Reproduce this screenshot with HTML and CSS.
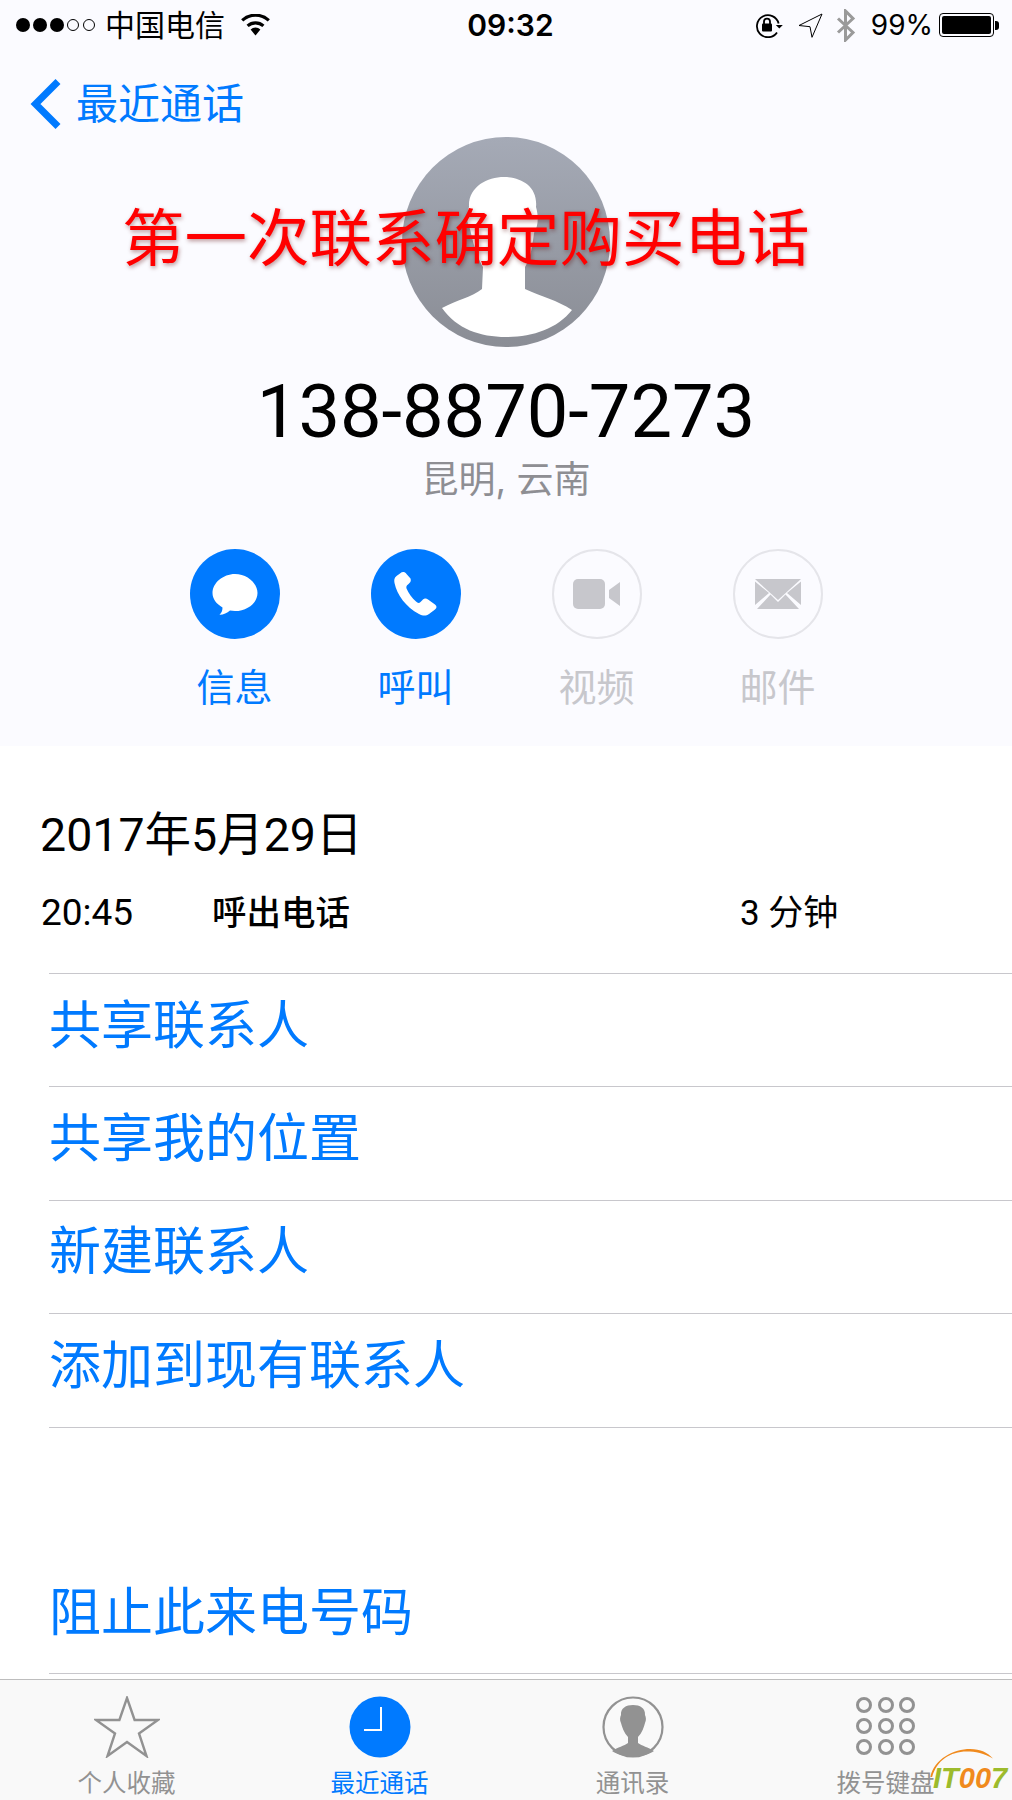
FILE: index.html
```html
<!DOCTYPE html>
<html lang="zh-CN">
<head>
    <meta charset="UTF-8">
    <meta name="viewport" content="width=device-width, initial-scale=1.0">
    <title>最近通话</title>
    <link rel="stylesheet" href="styles.css">
</head>
<body>
    <div class="top">
        <div class="status">
            <div class="status-left">
                <span class="signal">
                    <i class="dot on"></i><i class="dot on"></i><i class="dot on"></i><i class="dot"></i><i class="dot"></i>
                </span>
                <span class="carrier">中国电信</span>
                <svg class="wifi" width="31" height="22" viewBox="0 0 31 22">
                    <path d="M15.5 21.5 10.6 15.4a7.6 7.6 0 0 1 9.8 0z" fill="#000"/>
                    <path d="M7.6 11.9a12 12 0 0 1 15.8 0M2.2 6.4a19.6 19.6 0 0 1 26.6 0" fill="none" stroke="#000" stroke-width="3.2"/>
                </svg>
            </div>
            <div class="clock">09:32</div>
            <div class="status-right">
                <svg width="29" height="25" viewBox="0 0 29 25">
                    <path d="M24.6 10.5A11 11 0 1 0 23 19.5" fill="none" stroke="#000" stroke-width="1.8"/>
                    <path d="M21.8 12h7l-3.5 3.6z" fill="#000"/>
                    <rect x="8" y="10.5" width="10" height="8" rx="1" fill="#000"/>
                    <path d="M10 11V8.6a3 3 0 0 1 6 0V11" fill="none" stroke="#000" stroke-width="1.8"/>
                </svg>
                <svg class="ic-loc" width="25" height="25" viewBox="0 0 25 25">
                    <path d="M24 1 1 12.5l11 1.2 2 10.6z" fill="none" stroke="#000" stroke-width="1" stroke-linejoin="round"/>
                </svg>
                <svg class="ic-bt" width="20" height="33" viewBox="0 0 20 33">
                    <path d="M2 9.5 17 23.5 9.5 31V2L17 9.5 2 23.5" fill="none" stroke="#9a9a9a" stroke-width="3"/>
                </svg>
                <span class="battery-text">99%</span>
                <span class="battery"><i class="battery-fill"></i></span>
                <i class="battery-nub"></i>
            </div>
        </div>

        <div class="nav">
            <svg class="chevron" width="32" height="52" viewBox="0 0 32 52">
                <path d="M28 3.500 5.500 26 28 48.500" fill="none" stroke="#007aff" stroke-width="7"/>
            </svg>
            <span class="nav-title">最近通话</span>
        </div>

        <div class="contact">
            <svg class="avatar" width="208" height="210" viewBox="0 0 208 210">
                <defs>
                    <linearGradient id="avatarFill" x1="0" y1="0" x2="0" y2="1">
                        <stop offset="0" stop-color="#a5aab6"/>
                        <stop offset="1" stop-color="#8a8d95"/>
                    </linearGradient>
                </defs>
                <ellipse cx="104" cy="105" rx="104" ry="105" fill="url(#avatarFill)"/>
                <path d="M40 171C55 163 70 160 80 152L81 130C76 122 72 110 68 92C64 86 65 76 67 70C66 50 85 40 102 40C120 40 136 50 134 70C137 80 136 90 132 96C130 112 128 122 123 130L123 152C140 160 155 163 170 173C155 192 130 200 104 200C78 200 55 192 40 171Z" fill="#fff"/>
            </svg>
            <div class="stamp">第一次联系确定购买电话</div>
            <div class="phone">138-8870-7273</div>
            <div class="place">昆明, 云南</div>
        </div>

        <div class="actions">
            <div class="action">
                <span class="action-btn">
                    <svg width="46" height="46" viewBox="0 0 46 46">
                        <path d="M23 3C35 3 45.500 12 45.500 22C45.500 32 35 40 23 40C21 40 19.500 39.800 18 39.500C15 42 11 44 7.500 43.800C10 41.500 10.500 39 10.500 36.500C4.500 33 .5 28 .5 22C.5 12 11 3 23 3Z" fill="#fff"/>
                    </svg>
                </span>
                <span class="action-label">信息</span>
            </div>
            <div class="action">
                <span class="action-btn">
                    <svg width="46" height="46" viewBox="0 0 46 46">
                        <path d="M7 2.500 3.500 5C1 7 1 9 1.500 12C4 24 13 36 26 43C30 45 33 45 36 43L42 38.500C44 37 44 35 42 33.500L35 28.500C33 27 31 27.500 29.500 29L27.500 31C26 32.500 24.500 32 23 30.500C19 27 15.500 22 13.500 17.500C13 16 13.500 14.500 15 13.500L16.500 12C18 10.500 18 9 17.500 7.500L13.500 3C11.500 .5 9.500 .5 7 2.500Z" fill="#fff"/>
                    </svg>
                </span>
                <span class="action-label">呼叫</span>
            </div>
            <div class="action off">
                <span class="action-btn">
                    <svg width="48" height="30" viewBox="0 0 48 30">
                        <rect x="0" y="0" width="32" height="30" rx="5" fill="#c7c7cc"/>
                        <path d="M36 11 47 3V27L36 19Z" fill="#c7c7cc"/>
                    </svg>
                </span>
                <span class="action-label">视频</span>
            </div>
            <div class="action off">
                <span class="action-btn">
                    <svg width="46" height="30" viewBox="0 0 46 30">
                        <path d="M0 0H46L23 21Z" fill="#c7c7cc"/>
                        <path d="M0 2.500V26L14 14ZM46 2.500V26L32 14ZM2 30 15.500 15.500 23 23 30.500 15.500 44 30Z" fill="#c7c7cc"/>
                    </svg>
                </span>
                <span class="action-label">邮件</span>
            </div>
        </div>
    </div>

    <div class="details">
        <div class="date">2017年5月29日</div>
        <div class="call-row">
            <span class="call-time">20:45</span>
            <span class="call-type">呼出电话</span>
            <span>3 分钟</span>
        </div>
        <div class="links">
            <div class="link">共享联系人</div>
            <div class="link">共享我的位置</div>
            <div class="link">新建联系人</div>
            <div class="link">添加到现有联系人</div>
        </div>
        <div class="links links-plain">
            <div class="link">阻止此来电号码</div>
        </div>
    </div>

    <div class="tabbar">
        <div class="tab">
            <svg width="66" height="62" viewBox="0 0 66 62">
                <path d="M33 2 40.600 24H64L45 37.500 52.500 60 33 46 13.500 60 21 37.500 2 24H25.400Z" fill="none" stroke="#929292" stroke-width="2.400"/>
            </svg>
            <span class="tab-label">个人收藏</span>
        </div>
        <div class="tab active">
            <svg width="62" height="62" viewBox="0 0 62 62">
                <circle cx="31" cy="31" r="30.500" fill="#007aff"/>
                <path d="M32 11V34H15" fill="none" stroke="#fff" stroke-width="2"/>
            </svg>
            <span class="tab-label">最近通话</span>
        </div>
        <div class="tab">
            <svg width="62" height="62" viewBox="0 0 62 62">
                <circle cx="31" cy="31" r="29.500" fill="none" stroke="#929292" stroke-width="2.200"/>
                <path d="M10 55C16 51 22 50 26 47V41C22 37 20 31 19 27C17.500 24 18 21 19 19C18.500 12 24 9 31 9C38 9 43.500 12 43 19C44 21 44.500 24 43 27C42 31 40 37 36 41V47C40 50 46 51 52 55C47 58.500 40 60.500 31 60.500C22 60.500 15 58.500 10 55Z" fill="#929292"/>
            </svg>
            <span class="tab-label">通讯录</span>
        </div>
        <div class="tab">
            <div class="keypad">
                <i></i><i></i><i></i><i></i><i></i><i></i><i></i><i></i><i></i>
            </div>
            <span class="tab-label">拨号键盘</span>
        </div>
        <div class="watermark">
            <svg class="watermark-arc" width="72" height="30" viewBox="0 0 76 34">
                <path d="M1 33C5 12 28 1 46 1C58 1 66 5 72 12C62 6 52 4 42 4C24 4 8 14 3 33Z" fill="#f08a1d"/>
            </svg>
            <span class="wm-green">IT</span><span class="wm-orange">00</span><span class="wm-green">7</span>
        </div>
    </div>
</body>
</html>
```

FILE: styles.css
```css
html, body {
    margin: 0;
    padding: 0;
}
body {
    width: 1012px;
    height: 1800px;
    overflow: hidden;
    display: flex;
    flex-direction: column;
    background-color: #fff;
    color: #000;
    font-family: Inter, "Noto Sans CJK SC", sans-serif;
}
i {
    display: block;
}
.top {
    height: 746px;
    flex: none;
    background-color: #fbfbff;
}
.status {
    height: 50px;
    display: grid;
    grid-template-columns: 1fr auto 1fr;
    align-items: center;
}
.status-left {
    display: flex;
    align-items: center;
    padding-left: 16px;
}
.signal {
    display: flex;
    gap: 3px;
}
.dot {
    width: 12px;
    height: 12px;
    border: 1px solid #000;
    border-radius: 50%;
    box-sizing: border-box;
    margin-right: 1px;
}
.dot.on {
    background-color: #000;
    border-width: 0;
    width: 14px;
    height: 14px;
    margin: -1px 0;
}
.carrier {
    font-size: 30px;
    line-height: 36px;
    margin-left: 9px;
}
.wifi {
    margin-left: 15px;
}
.clock {
    margin-left: 9px;
    font-size: 30px;
    font-weight: 600;
    line-height: 36px;
}
.status-right {
    display: flex;
    align-items: center;
    justify-content: flex-end;
    padding-right: 13px;
}
.ic-loc {
    margin-left: 15px;
}
.ic-bt {
    margin-left: 13px;
}
.battery-text {
    font-size: 28px;
    line-height: 36px;
    margin-left: 15px;
}
.battery {
    width: 55px;
    height: 24px;
    margin-left: 6px;
    padding: 2px;
    box-sizing: border-box;
    border: 1px solid #000;
    border-radius: 4px;
}
.battery-fill {
    height: 100%;
    background-color: #000;
    border-radius: 2px;
}
.battery-nub {
    width: 4px;
    height: 9px;
    margin-left: 1px;
    background-color: #000;
    border-radius: 0 3px 3px 0;
}
.nav {
    height: 67px;
    display: flex;
    align-items: center;
    padding-left: 30px;
    padding-top: 20px;
    color: #007aff;
}
.nav-title {
    font-size: 42px;
    line-height: 50px;
    margin-left: 14px;
}
.contact {
    position: relative;
    display: flex;
    flex-direction: column;
    align-items: center;
}
.avatar {
    display: block;
}
.stamp {
    position: absolute;
    left: 122px;
    top: 63px;
    font-size: 62.500px;
    line-height: 76px;
    white-space: nowrap;
    color: #f00;
    text-shadow: 1px 2px 4px rgba(90, 0, 0, 0.4);
}
.phone {
    margin-top: 20px;
    font-family: Roboto, sans-serif;
    font-weight: 400;
    font-size: 74px;
    line-height: 90px;
}
.place {
    margin-top: -2px;
    font-size: 37px;
    line-height: 50px;
    color: #8e8e93;
}
.actions {
    display: flex;
    justify-content: center;
    margin-top: 44px;
}
.action {
    width: 181px;
    display: flex;
    flex-direction: column;
    align-items: center;
    color: #007aff;
}
.action-btn {
    width: 90px;
    height: 90px;
    box-sizing: border-box;
    display: flex;
    align-items: center;
    justify-content: center;
    border-radius: 50%;
    background-color: #007aff;
}
.action-label {
    margin-top: 24px;
    font-size: 38px;
    line-height: 48px;
}
.action.off {
    color: #c7c7cc;
}
.action.off .action-btn {
    background-color: transparent;
    border: 2px solid #e5e5ea;
}
.details {
    flex: 1;
    padding-top: 59px;
}
.date {
    padding-left: 40px;
    font-family: Roboto, "Noto Sans CJK SC", sans-serif;
    font-size: 46.500px;
    line-height: 60px;
}
.call-row {
    display: grid;
    grid-template-columns: 171px 528px auto;
    align-items: baseline;
    padding-left: 41px;
    margin-top: 23px;
    font-family: Roboto, "Noto Sans CJK SC", sans-serif;
    font-size: 35px;
    line-height: 50px;
}
.call-time {
    font-size: 37px;
}
.call-type {
    font-size: 34.500px;
    font-weight: 500;
}
.links {
    margin-left: 49px;
    margin-top: 34px;
    border-top: 1px solid #c8c7cc;
}
.links-plain {
    margin-top: 133px;
    border-top: none;
}
.link {
    height: 113.400px;
    box-sizing: border-box;
    padding-bottom: 18px;
    display: flex;
    align-items: center;
    border-bottom: 1px solid #c8c7cc;
    font-size: 52px;
    color: #007aff;
}
.links-plain .link {
    padding-bottom: 16px;
}
.tabbar {
    position: relative;
    height: 121px;
    flex: none;
    box-sizing: border-box;
    display: flex;
    padding-top: 16px;
    border-top: 1px solid #bdbdbd;
    background-color: #f9f9f9;
    color: #929292;
}
.tab {
    flex: 1;
    display: flex;
    flex-direction: column;
    align-items: center;
}
.tab.active {
    color: #007aff;
}
.tab-label {
    margin-top: 10px;
    font-size: 24.500px;
    line-height: 30px;
}
.keypad {
    width: 59px;
    height: 58px;
    margin-top: 1px;
    margin-bottom: 3px;
    display: grid;
    grid-template-columns: repeat(3, 16px);
    grid-template-rows: repeat(3, 16px);
    justify-content: space-between;
    align-content: space-between;
}
.keypad i {
    border: 3px solid #929292;
    border-radius: 50%;
}
.watermark {
    position: absolute;
    left: 933px;
    top: 82px;
    font-family: "Liberation Sans", sans-serif;
    font-size: 29px;
    line-height: 32px;
    font-weight: 700;
    font-style: italic;
    white-space: nowrap;
}
.watermark-arc {
    position: absolute;
    left: -6px;
    top: -14px;
}
.wm-green {
    color: #9dbb2c;
}
.wm-orange {
    color: #f08a1d;
}
```
